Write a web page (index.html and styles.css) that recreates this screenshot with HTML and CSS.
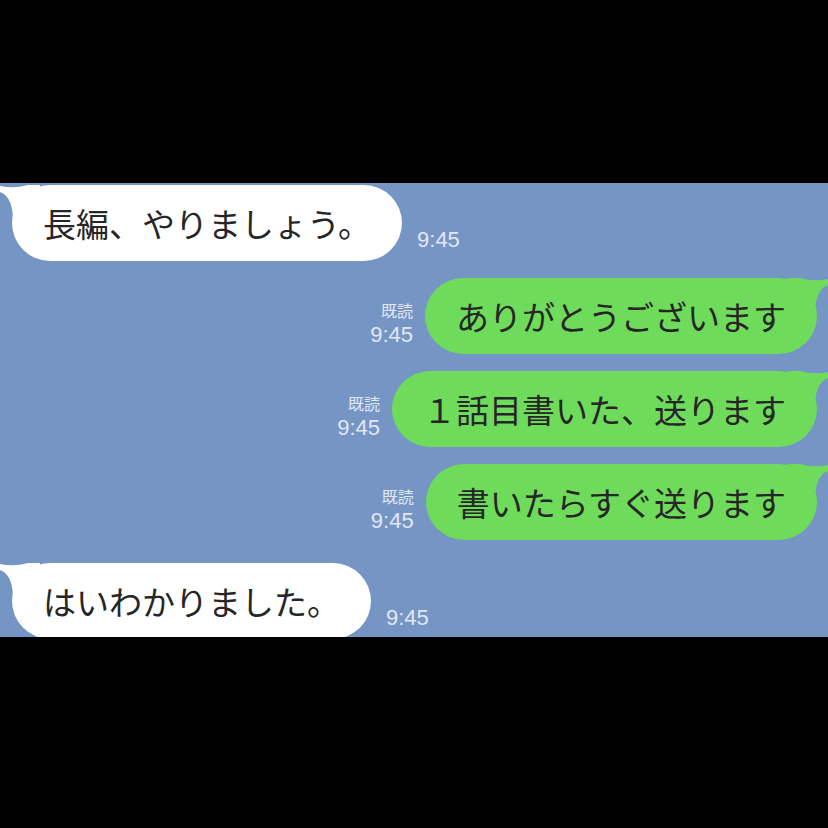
FILE: index.html
```html
<!DOCTYPE html>
<html lang="ja">
<head>
  <meta charset="UTF-8">
  <meta name="viewport" content="width=device-width, initial-scale=1.0">
  <title>トーク</title>
  <link rel="stylesheet" href="styles.css">
</head>
<body>

  <div class="chat">

    <!-- 相手 -->
    <div class="row in">
      <div class="bubble white">
        <svg class="tail" viewBox="0 0 40 40"><path d="M0 1 Q14 4 28 0 L40 0 L40 40 L13 40 Q14 12 0 7 Z"/></svg>
        長編、やりましょう。
      </div>
      <div class="meta"><span class="time">9:45</span></div>
    </div>

    <!-- 自分 -->
    <div class="row out">
      <div class="meta"><span class="read">既読</span><span class="time">9:45</span></div>
      <div class="bubble green">
        <svg class="tail" viewBox="0 0 40 40"><path d="M0 1 Q14 4 28 0 L40 0 L40 40 L13 40 Q14 12 0 7 Z"/></svg>
        ありがとうございます
      </div>
    </div>

    <div class="row out">
      <div class="meta"><span class="read">既読</span><span class="time">9:45</span></div>
      <div class="bubble green">
        <svg class="tail" viewBox="0 0 40 40"><path d="M0 1 Q14 4 28 0 L40 0 L40 40 L13 40 Q14 12 0 7 Z"/></svg>
        １話目書いた、送ります
      </div>
    </div>

    <div class="row out">
      <div class="meta"><span class="read">既読</span><span class="time">9:45</span></div>
      <div class="bubble green">
        <svg class="tail" viewBox="0 0 40 40"><path d="M0 1 Q14 4 28 0 L40 0 L40 40 L13 40 Q14 12 0 7 Z"/></svg>
        書いたらすぐ送ります
      </div>
    </div>

    <div class="row in last">
      <div class="bubble white">
        <svg class="tail" viewBox="0 0 40 40"><path d="M0 1 Q14 4 28 0 L40 0 L40 40 L13 40 Q14 12 0 7 Z"/></svg>
        はいわかりました。
      </div>
      <div class="meta"><span class="time">9:45</span></div>
    </div>

  </div>

</body>
</html>
```

FILE: styles.css
```css
body {
  background-color: #000;
  margin: 0;
  font-family: "Liberation Sans", "Noto Sans CJK JP", sans-serif;
}

/* トーク画面 */
.chat {
  margin-top: 183px;
  height: 454px;
  background-color: #7595c5;
  display: flex;
  flex-direction: column;
  gap: 17px;
  padding-top: 2px;
  box-sizing: border-box;
  overflow: hidden;
}

.row {
  display: flex;
  align-items: flex-end;
}

.row.in {
  padding-left: 12px;
}

.row.out {
  justify-content: flex-end;
  padding-right: 11px;
}

.row.last {
  margin-top: 6px;
}

.bubble {
  position: relative;
  height: 76px;
  line-height: 76px;
  padding: 0 31px;
  border-radius: 38px;
  font-family: "Noto Sans CJK JP", sans-serif;
  font-size: 33px;
  color: #262626;
  white-space: nowrap;
}

.bubble.white {
  background-color: #fff;
}

.bubble.green {
  background-color: #6fdb5b;
}

/* 吹き出しのしっぽ */
.tail {
  position: absolute;
  top: 0;
  width: 40px;
  height: 40px;
}

.white .tail {
  left: -12px;
  fill: #fff;
}

.green .tail {
  right: -11px;
  fill: #6fdb5b;
  transform: scaleX(-1);
}

.meta {
  display: flex;
  flex-direction: column;
  color: #e2e8f3;
}

.in .meta {
  margin-left: 15px;
  margin-bottom: 9px;
}

.out .meta {
  align-items: flex-end;
  margin-right: 12px;
  margin-bottom: 7px;
}

.read {
  font-family: "Noto Sans CJK JP", sans-serif;
  font-size: 16px;
  line-height: 23px;
}

.time {
  font-size: 22px;
  line-height: 25px;
}
```
